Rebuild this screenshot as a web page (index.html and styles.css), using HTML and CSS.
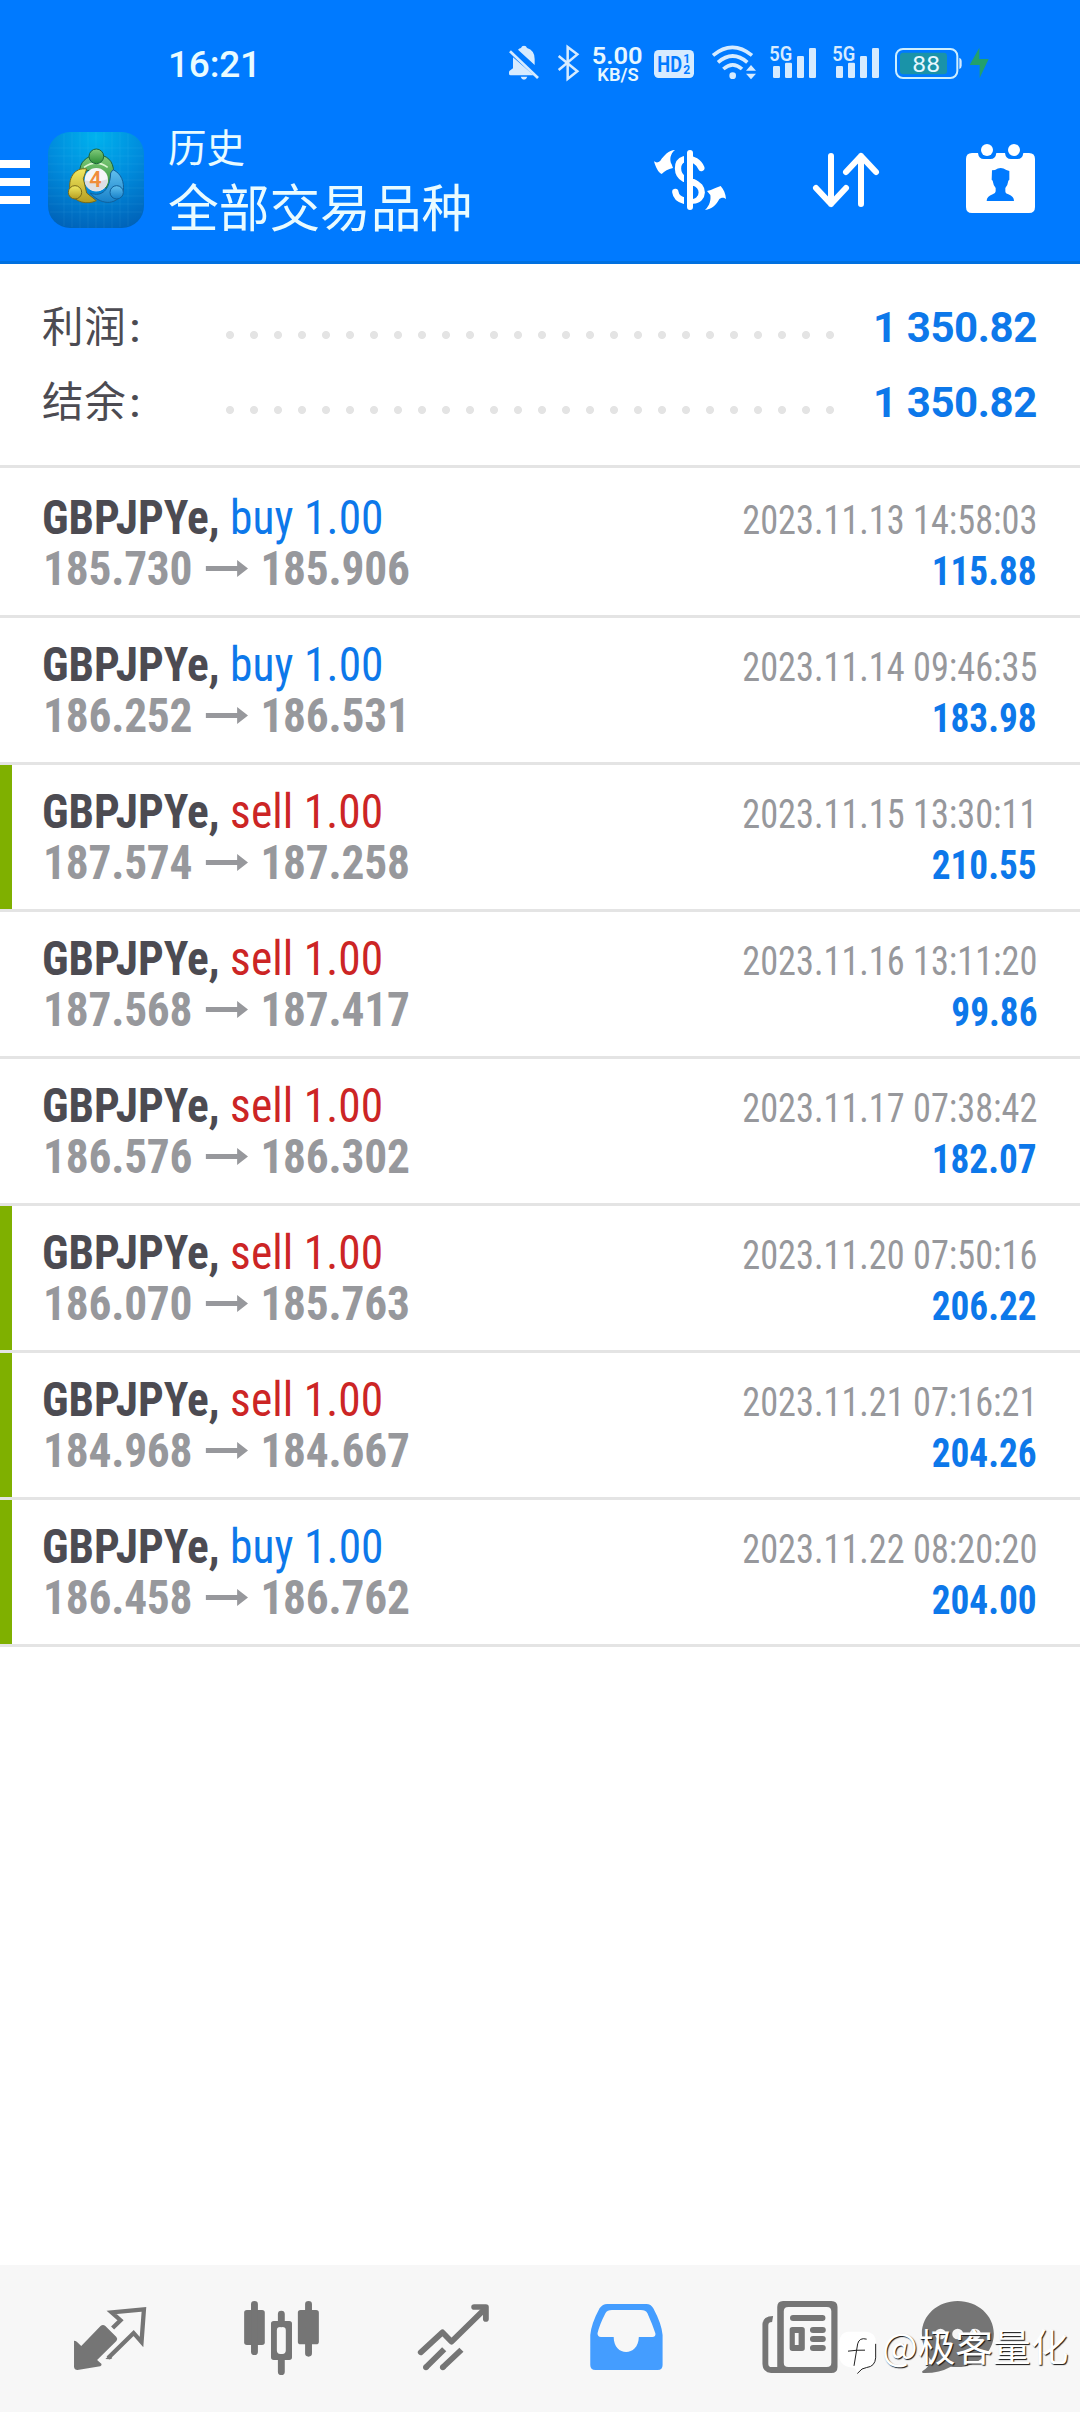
FILE: index.html
```html
<!DOCTYPE html>
<html lang="zh-CN">
<head>
<meta charset="utf-8">
<title>历史</title>
<link rel="stylesheet" href="styles.css">
</head>
<body>
<header class="header">
  <div class="status">
    <div class="clock">16:21</div>
    <svg class="status-icons" viewBox="0 0 1560 270" fill="#d6ebff">
      <path d="M93 84q2-7 9-7t9 7q23 7 23 33v18l-50-46q4-4 9-5zM69 112l62 54H62q-5 0-5-5v-4q0-4 4-6l8-6zM92 170h20q-3 9-10 9t-10-9z"/>
      <path d="M60 94l84 80" stroke="#d6ebff" stroke-width="8"/>
      <path d="M206 108l56 46-29 23V81l29 22-56 47" fill="none" stroke="#d6ebff" stroke-width="7.500"/>
      <g fill="#e6f7ff" font-weight="600"><text x="305" y="133" font-size="73" textLength="153" lengthAdjust="spacingAndGlyphs">5.00</text>
      <text x="322" y="183" font-size="53" textLength="124" lengthAdjust="spacingAndGlyphs">KB/S</text></g>
      <rect x="492" y="90" width="120" height="84" rx="14"/>
      <g fill="#007aff" font-weight="700"><text x="502" y="155" font-size="66" textLength="74" lengthAdjust="spacingAndGlyphs">HD</text>
      <text x="580" y="130" font-size="39" textLength="21" lengthAdjust="spacingAndGlyphs">1</text>
      <text x="580" y="163" font-size="36" textLength="21" lengthAdjust="spacingAndGlyphs">2</text></g>
      <g fill="none" stroke="#d6ebff" stroke-width="11"><path d="M669 106q58-48 117 0M684 127q44-38 88 0M700 147q28-25 56 0"/></g>
      <circle cx="728" cy="167" r="10"/>
      <path d="M768 152l15-17 15 17zM768 161h30l-15 17z"/>
      <g id="signal">
        <rect x="849" y="138" width="21" height="36" rx="4"/><rect x="885" y="128" width="21" height="46" rx="4"/>
        <rect x="921" y="108" width="21" height="66" rx="4"/><rect x="957" y="84" width="21" height="90" rx="4"/>
        <text x="838" y="124" font-size="61" font-weight="600" textLength="69" lengthAdjust="spacingAndGlyphs">5G</text>
      </g>
      <use href="#signal" x="189"/>
      <rect x="1218" y="87" width="184" height="87" rx="21" fill="none" stroke="#cdeeff" stroke-width="6"/>
      <path d="M1408 113q7 3 7 10v14q0 7-7 10z"/>
      <rect x="1230" y="98" width="141" height="65" rx="10" fill="#1a93a8"/>
      <text x="1267" y="155" font-size="67" fill="#e6f7ff" textLength="83" lengthAdjust="spacingAndGlyphs">88</text>
      <path d="M1468 83v34h28l-27 57v-39h-30z" fill="#23a06c"/>
    </svg>
  </div>
  <div class="toolbar">
    <div class="menu"><i></i><i></i><i></i></div>
    <svg class="app-icon" viewBox="12 12 288 288">
      <defs>
        <radialGradient id="sky" cx=".5" cy=".05" r="1"><stop offset="0" stop-color="#00b2ee"/><stop offset=".5" stop-color="#008bdc"/><stop offset="1" stop-color="#0062b8"/></radialGradient>
        <linearGradient id="green" x2="0" y2="1"><stop offset="0" stop-color="#82cc7c"/><stop offset="1" stop-color="#2b8d35"/></linearGradient>
        <linearGradient id="gold" x2="0" y2="1"><stop offset="0" stop-color="#f2ea62"/><stop offset="1" stop-color="#b59d20"/></linearGradient>
        <linearGradient id="blue" x2="0" y2="1"><stop offset="0" stop-color="#62c0ee"/><stop offset="1" stop-color="#1680c9"/></linearGradient>
      </defs>
      <rect x="12" y="12" width="288" height="288" rx="66" fill="url(#sky)"/>
      <path d="M60 18v276M84 14v284M108 12v288M132 12v288M156 12v288M180 12v288M204 12v288M228 14v284M252 18v276M18 60h276M14 84h284M12 108h288M12 132h288M12 156h288M12 180h288M12 204h288M14 228h284M18 252h276" stroke="#7ce2ff" stroke-opacity=".13" stroke-width="2"/>
      <path d="M108 131c-5-55 90-74 100-10 5 25-3 45-20 64l-25-61z" fill="url(#green)" stroke="#1c6339" stroke-width="3"/>
      <path d="M128 123c-37-6-58 29-49 70 13 31 51 38 78 25l-29-23-10-43z" fill="url(#gold)" stroke="#786a18" stroke-width="3"/>
      <path d="M207 125c26 12 34 38 31 64-23 51-73 38-99 6 34 14 59-10 61-60z" fill="url(#blue)" stroke="#11609b" stroke-width="3"/>
      <path d="M120 118q36-25 71 0" fill="none" stroke="#d9f5cf" stroke-width="5"/>
      <circle cx="157" cy="85" r="22" fill="url(#green)" stroke="#1c6339" stroke-width="3"/>
      <circle cx="93" cy="193" r="20" fill="url(#gold)" stroke="#786a18" stroke-width="3"/>
      <circle cx="218" cy="193" r="20" fill="url(#blue)" stroke="#11609b" stroke-width="3"/>
      <circle cx="157" cy="155" r="35" fill="#f5f5f8"/>
      <path d="M122 157q35 10 70-4c0 48-68 48-70 4z" fill="#dedee4"/>
      <text x="136" y="178" font-size="66" font-weight="600" fill="#f08c3a" textLength="37" lengthAdjust="spacingAndGlyphs">4</text>
    </svg>
    <div class="titles"><div class="subtitle">历史</div><div class="title">全部交易品种</div></div>
    <svg class="action" viewBox="0 0 480 453">
      <g fill="none" stroke="#fff" stroke-width="19" stroke-linecap="round">
        <path d="M304 174c-7-18-26-29-41-27M252 148c-25 8-23 46 0 58M279 217c36 10 34 53 0 55M226 246c2 14 12 22 26 26" />
      </g>
      <path d="M252 125h9v160h-9zM279 233v34q14-2 14-18t-14-16z" fill="#007aff"/>
      <path d="M270 129v162M270 213l12 4" stroke="#fff" stroke-width="18" stroke-linecap="round" fill="none"/>
      <path d="M225 120c-15 12-17 30-10 43l4 11c-15 4-25 9-34 18-10-3-18-21-23-38 8 5 12 4 19-2 12-17 25-31 44-32zM315 300c15-14 18-31 16-45l-10-12c17-4 27-10 41-15 9 10 15 24 16 39-8-6-13-4-20 0-10 18-22 31-43 33z" fill="#fff"/>
    </svg>
    <svg class="action" viewBox="480 0 480 453">
      <path d="M693 138v144M648 234l45 48 45-48M783 282V138M738 186l45-48 45 48" fill="none" stroke="#fff" stroke-width="18" stroke-linecap="round" stroke-linejoin="round"/>
    </svg>
    <svg class="action" viewBox="960 0 480 453" fill="#fff">
      <path d="M1116 129h18q2 18 18 18h19q16 0 18-18h26q2 18 18 18h19q16 0 18-18h17q18 0 18 18v144q0 18-18 18h-171q-18 0-18-18V147q0-18 18-18z"/>
      <circle cx="1161" cy="120" r="18"/><circle cx="1242" cy="120" r="18"/>
      <path d="M1176 181l9-1q17-12 34 0l9 3v26l-3 3q-2 15-9 22v10q0 7 9 9 17 6 17 20h-82q0-14 18-20 9-3 9-9v-10q-7-8-9-22l-3-3z" fill="#007aff"/>
    </svg>
  </div>
</header>

<section class="summary">
  <div class="sum-row"><span class="sum-label">利润<i>:</i></span><span class="dots"></span><b class="sum-value">1 350.82</b></div>
  <div class="sum-row"><span class="sum-label">结余<i>:</i></span><span class="dots"></span><b class="sum-value">1 350.82</b></div>
</section>

<svg class="defs"><symbol id="arrow" viewBox="0 0 43 17" preserveAspectRatio="none"><path d="M0 6h32V0l11 8.500L32 17v-6H0z"/></symbol></svg>
<main class="deals">
  <article class="deal"><div class="left"><div class="line"><b>GBPJPYe,</b> <span class="buy">buy 1.00</span></div><div class="prices">185.730<svg><use href="#arrow"/></svg>185.906</div></div><div class="right"><time>2023.11.13 14:58:03</time><div class="profit">115.88</div></div></article>
  <article class="deal"><div class="left"><div class="line"><b>GBPJPYe,</b> <span class="buy">buy 1.00</span></div><div class="prices">186.252<svg><use href="#arrow"/></svg>186.531</div></div><div class="right"><time>2023.11.14 09:46:35</time><div class="profit">183.98</div></div></article>
  <article class="deal tp"><div class="left"><div class="line"><b>GBPJPYe,</b> <span class="sell">sell 1.00</span></div><div class="prices">187.574<svg><use href="#arrow"/></svg>187.258</div></div><div class="right"><time>2023.11.15 13:30:11</time><div class="profit">210.55</div></div></article>
  <article class="deal"><div class="left"><div class="line"><b>GBPJPYe,</b> <span class="sell">sell 1.00</span></div><div class="prices">187.568<svg><use href="#arrow"/></svg>187.417</div></div><div class="right"><time>2023.11.16 13:11:20</time><div class="profit">99.86</div></div></article>
  <article class="deal"><div class="left"><div class="line"><b>GBPJPYe,</b> <span class="sell">sell 1.00</span></div><div class="prices">186.576<svg><use href="#arrow"/></svg>186.302</div></div><div class="right"><time>2023.11.17 07:38:42</time><div class="profit">182.07</div></div></article>
  <article class="deal tp"><div class="left"><div class="line"><b>GBPJPYe,</b> <span class="sell">sell 1.00</span></div><div class="prices">186.070<svg><use href="#arrow"/></svg>185.763</div></div><div class="right"><time>2023.11.20 07:50:16</time><div class="profit">206.22</div></div></article>
  <article class="deal tp"><div class="left"><div class="line"><b>GBPJPYe,</b> <span class="sell">sell 1.00</span></div><div class="prices">184.968<svg><use href="#arrow"/></svg>184.667</div></div><div class="right"><time>2023.11.21 07:16:21</time><div class="profit">204.26</div></div></article>
  <article class="deal tp"><div class="left"><div class="line"><b>GBPJPYe,</b> <span class="buy">buy 1.00</span></div><div class="prices">186.458<svg><use href="#arrow"/></svg>186.762</div></div><div class="right"><time>2023.11.22 08:20:20</time><div class="profit">204.00</div></div></article>
</main>

<nav class="tabs">
  <svg viewBox="69.7 45 499.500 441" preserveAspectRatio="none">
    <path d="M292 228q7-6 14 0l32 33q5 6 0 12l-56 57 13 12q0 6-4 7l-66 11q-9 0-10-9v-79q5 0 8 3l13 13z"/>
    <path d="M327 234l23-23-26-24 94-9-7 98-23-27-74 75" fill="none" stroke="#757575" stroke-width="12.500" stroke-linejoin="miter"/><path d="M306 327l12-11 8 8q-3 4-7 4z"/>
  </svg>
  <svg viewBox="569.2 45 499.500 441" preserveAspectRatio="none">
    <rect x="709" y="180" width="60" height="105" rx="8"/><rect x="865" y="180" width="61" height="103" rx="8"/>
    <path d="M739 163v142M896 163v147M817 192v30M817 325v40" stroke="#757575" stroke-width="20" stroke-linecap="round"/>
    <path fill-rule="evenodd" d="M795 213h45q8 0 8 8v101q0 8-8 8h-45q-8 0-8-8V221q0-8 8-8zM814 231q-10 0-10 10v60q0 11 10 11h6q10 0 10-11v-60q0-10-10-10z"/>
  </svg>
  <svg viewBox="1068.7 45 499.500 441" preserveAspectRatio="none">
    <g fill="none" stroke="#757575" stroke-width="17" stroke-linejoin="round"><path d="M1222 307l63-60 26 28 97-98" stroke-linecap="round"/><path d="M1377 171h34v36" stroke-linecap="round"/><path d="M1290 298l-53 54M1340 299l-54 53"/></g>
    <circle cx="1237" cy="352" r="8.500"/><circle cx="1286" cy="352" r="8.500"/>
  </svg>
  <svg viewBox="0 45 499.500 441" preserveAspectRatio="none">
    <path fill="#449dff" fill-rule="evenodd" d="M195 162h114q13 0 20 13 24 46 27 80v90q0 15-14 15H161q-15 0-15-15v-90q3-34 27-80 9-13 22-13zM209 180q-14 0-19 10-17 34-23 60 0 11 10 11h37c0 60 72 60 73 0h39q11 0 9-11-9-28-23-60-5-10-19-10z"/>
  </svg>
  <svg viewBox="499.500 45 499.500 441" preserveAspectRatio="none">
    <path fill-rule="evenodd" d="M706 153h140q18 0 18 18v180q0 18-18 18H671q-24-2-25-27V221q2-22 31-23l-3 18q-11 0-11 10v115q0 10 10 10h16V171q0-18 17-18zM721 171q-13 0-13 13v154q0 13 13 13h112q13 0 13-13V184q0-13-13-13z"/>
    <path d="M735 204h85" stroke="#757575" stroke-width="18" stroke-linecap="round"/>
    <path d="M793 240h28M793 267h28M793 294h28" stroke="#757575" stroke-width="18" stroke-linecap="round"/>
    <path fill-rule="evenodd" d="M733 231h28q8 0 8 8v56q0 8-8 8h-28q-8 0-8-8v-56q0-8 8-8zM740 249v36h11v-36z"/>
  </svg>
  <svg viewBox="999 45 499.500 441" preserveAspectRatio="none">
    <path d="M1213 153c57 0 105 42 105 98s-48 100-105 100q-11 0-20-1-34 20-80 19-5 0-3-5 22-16 27-32-28-33-28-81c0-56 47-98 104-98z"/>
    <g fill="#f6f6f6"><circle cx="1163" cy="252" r="16"/><circle cx="1213" cy="252" r="16"/><circle cx="1264" cy="252" r="16"/></g>
  </svg>
  <div class="watermark">
    <svg viewBox="55 60 120 140"><path d="M84 68h56q28 2 29 32v45q-2 29-30 31-10 0-26 18-4-18-14-18-38-4-40-34V98q3-28 25-30z" fill="#fff"/><path d="M141 90q-22-6-27 14l-11 66M85 126q26-4 51-3M168 104v42q-2 26-27 29-14 0-28 18" fill="none" stroke="#222" stroke-width="3"/></svg>
    <span>@极客量化</span>
  </div>
</nav>
</body>
</html>
```
FILE: styles.css
```css
* { box-sizing: border-box; }
body {
  margin: 0; width: 1080px; height: 2412px; background: #fff;
  display: flex; flex-direction: column; overflow: hidden;
  font-family: Roboto, "Noto Sans CJK SC", sans-serif;
}
svg { display: block; flex: none; }
.defs { width: 0; height: 0; position: absolute; }

.header { height: 264px; background: #007aff; border-bottom: 3px solid #0070e0; color: #e9fbff; }
.status { height: 110px; padding: 20px 0 0 168px; display: flex; }
.clock { width: 322px; font-size: 37px; line-height: 89px; font-weight: 500; letter-spacing: -.2px; }
.status-icons { width: 520px; height: 90px; }
.toolbar { height: 151px; display: flex; }
.menu { width: 30px; padding-top: 50px; display: flex; flex-direction: column; gap: 10px; }
.menu i { height: 8px; background: #fff; }
.app-icon { width: 96px; height: 96px; margin: 22px 24px 0 18px; }
.titles { width: 432px; padding-top: 16px; white-space: nowrap; }
.subtitle { font-size: 38.5px; line-height: 46px; }
.title { font-size: 50.7px; line-height: 60px; margin-top: 8px; }
.action { width: 160px; height: 151px; }

.summary { height: 204px; padding: 26px 43px 0 42px; border-bottom: 3px solid #e4e4e4; }
.sum-row { height: 75px; display: flex; align-items: center; }
.sum-label { width: 176px; padding-bottom: 7px; font-size: 41.5px; letter-spacing: .7px; color: #4c4b52; }
.sum-label i { font-style: normal; font-weight: 500; padding-left: 3px; }
.dots { width: 624px; height: 24px; margin-top: 15px; background: radial-gradient(circle, #e4e4e4 3.6px, transparent 4.4px) 0 0 / 24px 24px; }
.sum-value { margin-left: auto; font-size: 42px; letter-spacing: -.4px; color: #0d78ea; }

.deals { font-family: "Roboto Condensed", sans-serif; line-height: 51px; font-size: 48px; padding-top: 3px; }
.deal { height: 147px; padding: 21px 43px 0 42px; border-bottom: 3px solid #e4e4e4; display: flex; justify-content: space-between; position: relative; white-space: nowrap; }
.deals .deal:first-child { margin-top: 0; }
.deal.tp::before { content: ""; position: absolute; left: 0; top: 0; bottom: 0; width: 12px; background: #7fb000; }
.left { transform: scaleX(.945); transform-origin: left; }
.line { color: #4c4b52; }
.buy { color: #0d78ea; letter-spacing: .1px; }
.sell { color: #cc2525; letter-spacing: .1px; }
.prices { display: flex; align-items: center; font-weight: 700; letter-spacing: -.2px; color: #97989c; padding-left: 1px; }
.prices svg { width: 45px; height: 17px; margin: 0 13px 0 14px; fill: currentColor; }
.right { display: flex; flex-direction: column; align-items: flex-end; padding-top: 3px; font-size: 40px; }
.right time { color: #97989c; transform: scaleX(.907); transform-origin: right; }
.profit { font-weight: 700; color: #0d78ea; transform: scaleX(.932); transform-origin: right; }

.tabs { margin-top: auto; height: 147px; background: #f7f7f7; padding: 0 24px; display: flex; position: relative; fill: #757575; }
.tabs > svg { width: 172px; height: 147px; }
.watermark { position: absolute; left: 838px; top: 64px; display: flex; align-items: flex-start; color: #fff; font: 37.7px/50px "Noto Sans CJK SC", sans-serif; text-shadow: 1px 1px 1px #111; white-space: nowrap; }
.watermark svg { width: 40px; height: 47px; }
.watermark span { margin: -9px 0 0 4px; }
```
